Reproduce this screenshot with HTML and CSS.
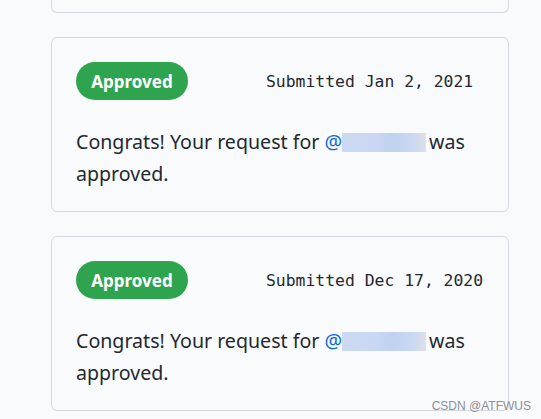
FILE: index.html
```html
<!DOCTYPE html>
<html lang="en">
<head>
<meta charset="utf-8">
<link rel="stylesheet" href="styles.css">
</head>
<body>
<main class="list">
  <div class="card card-stub"></div>
  <section class="card">
    <div class="card-head">
      <span class="badge">Approved</span>
      <span class="date">Submitted Jan 2, 2021</span>
    </div>
    <p class="msg">Congrats! Your request for <span class="mention">@<span class="blur"></span></span>was approved.</p>
  </section>
  <section class="card">
    <div class="card-head">
      <span class="badge">Approved</span>
      <span class="date">Submitted Dec 17, 2020</span>
    </div>
    <p class="msg">Congrats! Your request for <span class="mention">@<span class="blur"></span></span>was approved.</p>
  </section>
</main>
<div class="watermark">CSDN @ATFWUS</div>
</body>
</html>
```
FILE: styles.css
```css
html, body {
  margin: 0;
  padding: 0;
  background: #f9fafc;
  height: 100%;
  overflow: hidden;
}
.list {
  width: 458px;
  margin-left: 51px;
  display: flex;
  flex-direction: column;
  gap: 24px;
}
.card {
  border: 1px solid #d3d8df;
  border-radius: 6px;
  background: #f9fafc;
  padding: 24px 24px 21px 24px;
  box-sizing: border-box;
}
.card-stub {
  height: 13px;
  padding: 0;
  border-top: none;
  border-radius: 0 0 6px 6px;
}
.card-head {
  display: flex;
  align-items: center;
  gap: 78px;
}
.badge {
  display: inline-flex;
  align-items: center;
  justify-content: center;
  width: 112px;
  height: 38px;
  border-radius: 19px;
  background: #2ea44f;
  color: #fff;
  font-family: "Noto Sans", "Open Sans", sans-serif;
  font-weight: 700;
  font-size: 17px;
}
.date {
  font-family: "DejaVu Sans Mono", "Liberation Mono", monospace;
  font-size: 16.4px;
  color: #24292f;
}
.msg {
  margin: 26px 0 0 0;
  font-family: "Noto Sans", "Open Sans", sans-serif;
  font-size: 19.6px;
  line-height: 32px;
  color: #24292f;
}
.mention {
  color: #0969da;
}
.blur {
  display: inline-block;
  width: 84px;
  height: 19px;
  vertical-align: -3px;
  background: linear-gradient(90deg, #ccd9f2 0%, #c9d7f3 40%, #bfd2f0 60%, #cbd8f2 85%, #dde1e8 100%);
  margin-right: 3px;
}
.watermark {
  position: absolute;
  right: 10px;
  bottom: 6px;
  font-family: "Liberation Sans", Arial, sans-serif;
  font-size: 12px;
  color: #8d9096;
}
```
